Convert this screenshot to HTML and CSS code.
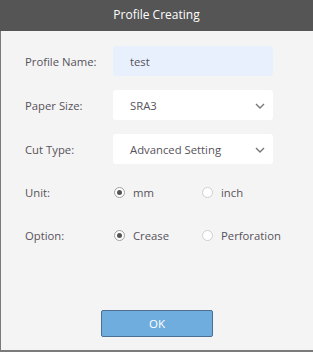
FILE: index.html
```html
<!DOCTYPE html>
<html>
<head>
<meta charset="utf-8">
<link rel="stylesheet" href="styles.css">
<title>Profile Creating</title>
</head>
<body>

  <div class="dialog">
    <!-- Title bar -->
    <div class="title">Profile Creating</div>

    <div class="content">
      <div class="row">
        <label class="label">Profile Name:</label>
        <div class="field name-field">test</div>
      </div>

      <div class="row">
        <label class="label">Paper Size:</label>
        <div class="field select">
          <span>SRA3</span>
          <svg class="chevron" width="10" height="6" viewBox="0 0 10 6"><path d="M1 1 L5 5 L9 1" fill="none" stroke="#777" stroke-width="1.4"/></svg>
        </div>
      </div>

      <div class="row">
        <label class="label">Cut Type:</label>
        <div class="field select">
          <span>Advanced Setting</span>
          <svg class="chevron" width="10" height="6" viewBox="0 0 10 6"><path d="M1 1 L5 5 L9 1" fill="none" stroke="#777" stroke-width="1.4"/></svg>
        </div>
      </div>

      <div class="row radio-row">
        <label class="label">Unit:</label>
        <div class="options">
          <span class="opt"><span class="radio checked"></span>mm</span>
          <span class="opt"><span class="radio"></span>inch</span>
        </div>
      </div>

      <div class="row radio-row">
        <label class="label">Option:</label>
        <div class="options">
          <span class="opt"><span class="radio checked"></span>Crease</span>
          <span class="opt"><span class="radio"></span>Perforation</span>
        </div>
      </div>
    </div>

    <div class="footer">
      <button class="ok">OK</button>
    </div>
  </div>

</body>
</html>
```

FILE: styles.css
```css
* {
  box-sizing: border-box;
}

body {
  margin: 0;
  background-color: #f4f4f4;
  font-family: "Open Sans", "DejaVu Sans", sans-serif;
  font-size: 11.3px;
  color: #57525a;
}

.dialog {
  width: 313px;
  height: 352px;
  display: flex;
  flex-direction: column;
  background-color: #f4f4f4;
  border-left: 1px solid #7a7a7a;
  border-bottom: 2px solid #7a7a7a;
}

.title {
  height: 31px;
  margin-left: -1px;
  background-color: #555555;
  color: #ffffff;
  font-size: 12px;
  text-align: center;
  line-height: 29px;
}

.content {
  padding: 15px 0 0 24px;
  display: flex;
  flex-direction: column;
  gap: 14px;
}

.row {
  display: flex;
  align-items: center;
  height: 30px;
}

.label {
  width: 88px;
}

.field {
  width: 160px;
  height: 30px;
  border-radius: 3px;
  background-color: #ffffff;
  padding-left: 17px;
  display: flex;
  align-items: center;
}

.name-field {
  background-color: #e8f0fe;
}

.select {
  justify-content: space-between;
  padding-right: 8px;
}

.chevron {
  margin-top: 2px;
}

.radio-row {
  height: 29px;
}

.options {
  display: flex;
  padding-left: 1px;
}

.opt {
  display: flex;
  align-items: center;
  width: 88px;
}

.radio {
  width: 11px;
  height: 11px;
  border-radius: 50%;
  border: 1px solid #cfcfcf;
  background-color: #ffffff;
  margin-right: 8px;
  position: relative;
}

.radio.checked {
  border-color: #a0a0a0;
}

.radio.checked::after {
  content: "";
  position: absolute;
  left: 2px;
  top: 2px;
  width: 5px;
  height: 5px;
  border-radius: 50%;
  background-color: #555555;
}

.footer {
  margin-top: auto;
  padding: 0 0 13px 100px;
}

.ok {
  width: 112px;
  height: 27px;
  background-color: #6fadde;
  border: 1px solid #4d6f94;
  border-radius: 2px;
  color: #ffffff;
  font-family: "Open Sans", "DejaVu Sans", sans-serif;
  font-size: 11.5px;
}
```
